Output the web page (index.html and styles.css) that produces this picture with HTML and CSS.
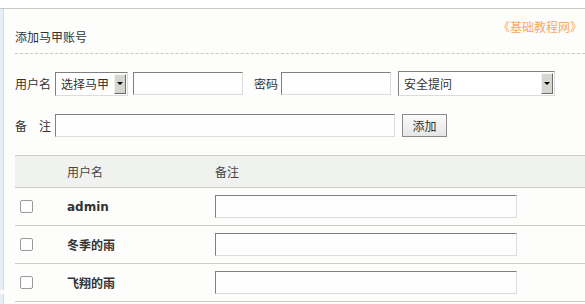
FILE: index.html
```html
<!DOCTYPE html>
<html lang="zh-CN">
<head>
    <meta charset="UTF-8">
    <title>添加马甲账号</title>
    <link rel="stylesheet" href="styles.css">
</head>
<body>
    <div class="page">
        <div class="side">
            <div class="side-top"></div>
            <div class="side-bottom"></div>
        </div>
        <div class="main">
            <div class="head">
                <h2>添加马甲账号</h2>
                <a class="site" href="#">《基础教程网》</a>
            </div>
            <form class="add-form">
                <div class="form-row">
                    <label>用户名</label>
                    <div class="select select-user"><span>选择马甲</span><i class="drop"></i></div>
                    <input type="text" class="text text-name">
                    <label class="pw-label">密码</label>
                    <input type="password" class="text text-pw">
                    <div class="select select-q"><span>安全提问</span><i class="drop"></i></div>
                </div>
                <div class="form-row">
                    <label class="spread"><span>备</span><span>注</span></label>
                    <input type="text" class="text text-note">
                    <button type="button" class="btn">添加</button>
                </div>
            </form>
            <table class="list">
                <thead>
                    <tr>
                        <th class="col-check"></th>
                        <th class="col-user">用户名</th>
                        <th>备注</th>
                    </tr>
                </thead>
                <tbody>
                    <tr>
                        <td><input type="checkbox" class="check"></td>
                        <td class="name latin">admin</td>
                        <td><input type="text" class="text text-row"></td>
                    </tr>
                    <tr>
                        <td><input type="checkbox" class="check"></td>
                        <td class="name">冬季的雨</td>
                        <td><input type="text" class="text text-row"></td>
                    </tr>
                    <tr>
                        <td><input type="checkbox" class="check"></td>
                        <td class="name">飞翔的雨</td>
                        <td><input type="text" class="text text-row"></td>
                    </tr>
                </tbody>
            </table>
        </div>
    </div>
</body>
</html>
```

FILE: styles.css
```css
* { box-sizing: border-box; }
body { margin: 0; background: #fff; font-family: "Noto Sans CJK SC", "DejaVu Sans", sans-serif; font-size: 12px; color: #333; }
.page { display: flex; margin-top: 8px; border-top: 1px solid #c8c8c8; background: #fdfdfb; height: 296px; overflow: hidden; }
.side { width: 4px; flex: none; display: flex; flex-direction: column; gap: 4px; }
.side-top { height: 281px; background: #e8eef6; border-right: 1px solid #d3dbe5; }
.side-bottom { flex: 1; background: #e8eef6; border-right: 1px solid #d3dbe5; }
.main { flex: 1; padding-left: 11px; }

.head { display: flex; justify-content: space-between; height: 45px; border-bottom: 1px dashed #c8c8c8; }
.head h2 { margin: 0; padding-top: 20px; font-size: 12px; font-weight: normal; line-height: 16px; color: #333; }
.site { padding-top: 10px; padding-right: 3px; line-height: 16px; color: #f8a862; text-decoration: none; }

.add-form { padding-top: 17px; }
.form-row { display: flex; align-items: center; height: 25px; margin-bottom: 17px; }
.form-row label { width: 36px; margin-right: 4px; line-height: 16px; }
.form-row .pw-label { width: auto; margin: 0 3px 0 11px; }
.spread { display: flex; justify-content: space-between; }

.text { height: 23px; padding: 0 3px; border: 1px solid #dcdcdc; border-top-color: #808080; border-left-color: #808080; background: #fefefe; font: inherit; }
.text-name { width: 110px; margin-left: 5px; }
.text-pw { width: 110px; }
.text-note { width: 340px; }
.text-row { width: 302px; }

.select { display: flex; align-items: stretch; height: 24px; border: 1px solid #dcdcdc; border-top-color: #808080; border-left-color: #808080; background: #fff; }
.select span { flex: 1; padding-left: 5px; line-height: 22px; }
.select-user { width: 73px; }
.select-q { width: 157px; height: 25px; margin-left: 7px; }
.select-q span { line-height: 23px; }
.drop { width: 12px; flex: none; margin: 1px 1px 1px 0; display: flex; align-items: center; justify-content: center; background: #d6d6d0; border: 1px solid #f4f4f0; border-right-color: #6c6c6c; border-bottom-color: #6c6c6c; }
.drop::after { content: ""; border-left: 3px solid transparent; border-right: 3px solid transparent; border-top: 3px solid #000; }

.btn { height: 23px; width: 45px; margin-left: 7px; padding: 0; border: 1px solid #8a8a8a; background: linear-gradient(#fbfbfb, #e6e6e6); font: inherit; color: #333; }

.list { width: 570px; border-collapse: collapse; }
.list th { height: 32px; padding: 0; text-align: left; font-weight: normal; background: #f0f2f0; border-top: 1px solid #cdcdcd; border-bottom: 1px solid #cdcdcd; color: #444; }
.list td { height: 38px; padding: 0; border-bottom: 1px solid #cdcdcd; }
.col-check { width: 52px; }
.col-user { width: 148px; }
.check { appearance: none; display: block; width: 13px; height: 13px; margin: 0 0 0 5px; border: 1px solid #9a9a9a; border-radius: 2px; background: #fff; }
.name { font-weight: bold; color: #333; }
.latin { font-family: "DejaVu Sans", sans-serif; }
```
